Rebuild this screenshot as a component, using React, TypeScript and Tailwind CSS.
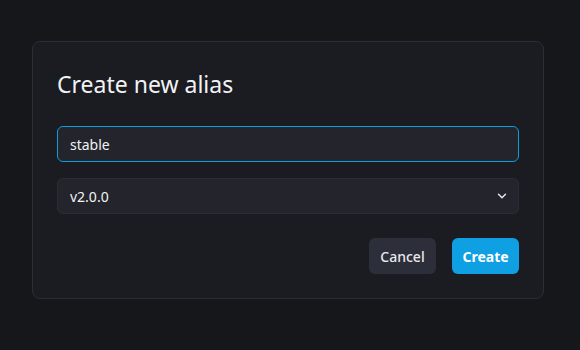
import React, { useState } from 'react';
import { ChevronDown } from 'lucide-react';

export default function App() {
  const [alias, setAlias] = useState('stable');
  const [version, setVersion] = useState('v2.0.0');

  return (
    <div
      className="w-[580px] h-[350px] bg-[#16171b] pt-[41px] pl-[32px]"
      style={{ fontFamily: '"Noto Sans", "Liberation Sans", sans-serif' }}
    >
      <div className="w-[512px] rounded-lg border border-[#2c2e35] bg-[#1b1c22] p-6">
        {/* Header */}
        <h2 className="text-[23px] leading-[32px] text-[#f1f2f4] font-normal mt-[2px] mb-[26px]">
          Create new alias
        </h2>

        {/* Alias name */}
        <input
          autoFocus
          value={alias}
          onChange={(e) => setAlias(e.target.value)}
          className="block w-full h-9 rounded-md border border-[#0e9ee0] bg-[#24252c] px-3 text-[14px] text-[#f1f2f4] outline-none caret-[#f1f2f4]"
        />

        {/* Version */}
        <div className="relative mt-4">
          <select
            value={version}
            onChange={(e) => setVersion(e.target.value)}
            className="block w-full h-9 appearance-none rounded-md border border-[#2c2e35] bg-[#24252c] px-3 text-[14px] text-[#f1f2f4] outline-none"
          >
            <option value="v2.0.0">v2.0.0</option>
            <option value="v1.0.0">v1.0.0</option>
          </select>
          <ChevronDown className="pointer-events-none absolute right-[10px] top-1/2 h-[14px] w-[14px] -translate-y-1/2 text-[#e5e7eb]" strokeWidth={2.5} />
        </div>

        {/* Action Buttons */}
        <div className="mt-6 flex justify-end gap-4">
          <button className="h-9 w-[67px] rounded-md bg-[#2c2e39] text-[14px] font-medium text-[#e8e9ec]">
            Cancel
          </button>
          <button className="h-9 w-[67px] rounded-md bg-[#0ea0e2] text-[14px] font-bold text-white">
            Create
          </button>
        </div>
      </div>
    </div>
  );
}
